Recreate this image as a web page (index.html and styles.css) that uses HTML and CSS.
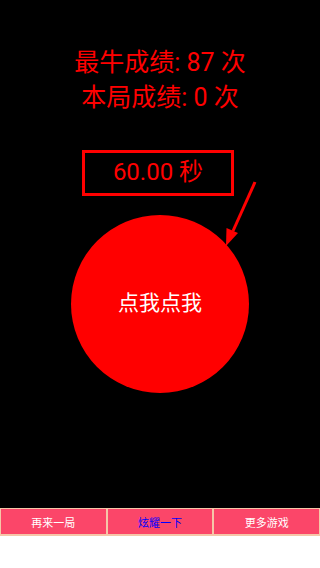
FILE: index.html
```html
<!DOCTYPE html>
<html lang="zh">
<head>
    <meta charset="UTF-8">
    <meta name="viewport" content="width=device-width, initial-scale=1.0">
    <title>点我点我</title>
    <link rel="stylesheet" href="styles.css">
</head>
<body>
    <!-- 游戏区域 -->
    <div class="game">
        <div class="scores">
            <p>最牛成绩: 87 次</p>
            <p>本局成绩: 0 次</p>
        </div>
        <div class="timer">60.00 秒</div>
        <div class="tap-button">点我点我</div>
        <svg class="arrow" width="320" height="508" viewBox="0 0 320 508">
            <line x1="255" y1="182" x2="233" y2="231" stroke="#ff0000" stroke-width="3"/>
            <polygon points="226,246 226.5,228 238,233" fill="#ff0000"/>
        </svg>
    </div>

    <!-- 底部按钮 -->
    <div class="toolbar">
        <button>再来一局</button>
        <button class="show-off">炫耀一下</button>
        <button>更多游戏</button>
    </div>
</body>
</html>
```

FILE: styles.css
```css
body {
    margin: 0;
    background-color: #fff;
    font-family: Roboto, "Noto Sans CJK SC", sans-serif;
}
.game {
    position: relative;
    height: 508px;
    background-color: #000;
    overflow: hidden;
}
.scores {
    padding-top: 45px;
    text-align: center;
    color: #f00;
    font-size: 25px;
}
.scores p {
    margin: 0;
    line-height: 35px;
}
.timer {
    box-sizing: border-box;
    width: 152px;
    height: 46px;
    margin: 35px 0 0 82px;
    border: 3px solid #f00;
    color: #f00;
    font-size: 24px;
    line-height: 38px;
    text-align: center;
}
.tap-button {
    width: 178px;
    height: 178px;
    margin: 19px 0 0 71px;
    border-radius: 50%;
    background-color: #f00;
    color: #fff;
    font-size: 21px;
    line-height: 176px;
    text-align: center;
}
.arrow {
    position: absolute;
    top: 0;
    left: 0;
}
.toolbar {
    display: flex;
    height: 28px;
}
.toolbar button {
    flex: 1;
    margin: 0;
    padding: 0;
    border: 1px solid #f5c6a8;
    border-bottom-width: 2px;
    background-color: #fb4669;
    color: #fff;
    font-family: "Noto Sans CJK SC", sans-serif;
    font-size: 11px;
}
.toolbar .show-off {
    color: #00f;
}
```
